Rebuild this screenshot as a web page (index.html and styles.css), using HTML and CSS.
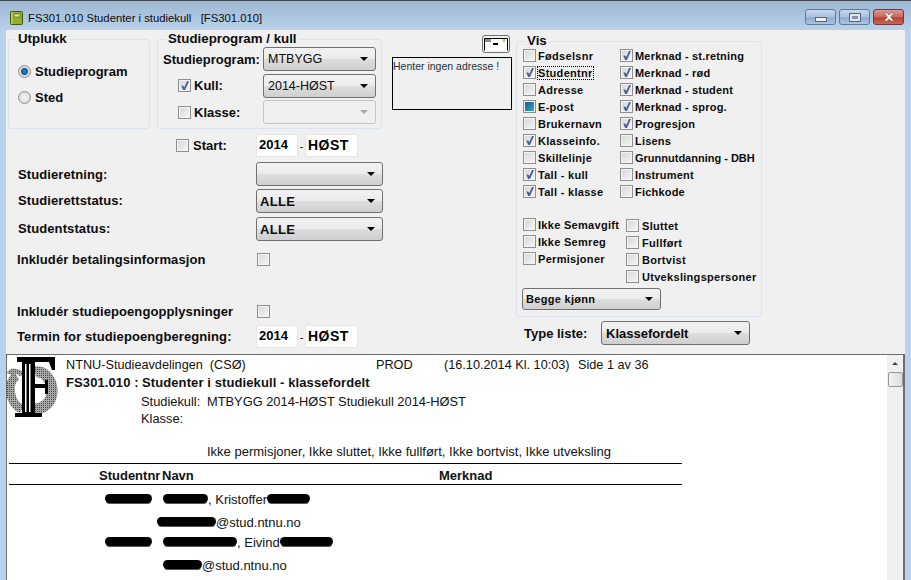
FILE: index.html

```html
<!DOCTYPE html>
<html lang="nb">
<head>
    <meta charset="UTF-8">
    <title>FS301.010 Studenter i studiekull</title>
    <link rel="stylesheet" href="styles.css">
</head>
<body>
<div id="window">
    <header id="titlebar">
        <svg class="app-icon" width="13" height="14" viewBox="0 0 13 14">
            <rect x="0.500" y="0.500" width="12" height="13" rx="1" fill="#93ad2c" stroke="#3f5a12"/>
            <path d="M2 1v12" stroke="#d8e27a" stroke-width="1"/>
            <rect x="4" y="3" width="6" height="3" fill="#e4eb95" stroke="#3f5a12" stroke-width="0.600"/>
        </svg>
        <span class="title-text">FS301.010 Studenter i studiekull &nbsp; [FS301.010]</span>
        <div class="win-buttons">
            <div class="win-btn"><i class="glyph-min"></i></div>
            <div class="win-btn"><i class="glyph-max"></i></div>
            <div class="win-btn close">
                <svg width="16" height="10" viewBox="0 0 16 10"><path d="M3 1h3l2 2 2-2h3l-3.500 4L13 9h-3L8 7 6 9H3l3.500-4z" fill="#f4f4f4" stroke="#8b4a44" stroke-width="0.500"/></svg>
            </div>
        </div>
    </header>

    <form id="params">
        <div class="left">
            <div class="top-row">
                <fieldset class="group utplukk">
                    <legend>Utplukk</legend>
                    <div class="radio-row"><span class="radio on"></span><label>Studieprogram</label></div>
                    <div class="radio-row"><span class="radio"></span><label>Sted</label></div>
                </fieldset>
                <fieldset class="group program">
                    <legend>Studieprogram / kull</legend>
                    <div class="prog-row">
                        <label class="prog-label">Studieprogram:</label>
                        <div class="select prog-select">MTBYGG</div>
                    </div>
                    <div class="prog-row">
                        <div class="prog-check"><span class="check on"></span><label>Kull:</label></div>
                        <div class="select prog-select">2014-HØST</div>
                    </div>
                    <div class="prog-row">
                        <div class="prog-check"><span class="check"></span><label>Klasse:</label></div>
                        <div class="select prog-select disabled"></div>
                    </div>
                </fieldset>
                <div class="address">
                    <div class="mail-btn">
                        <svg width="24" height="13" viewBox="0 0 24 13">
                            <path d="M0.500 12.500V0.500H23.500V12.500" fill="#fff" stroke="#000"/>
                            <rect x="1" y="1" width="6" height="3" fill="#8a8a8a"/>
                            <rect x="9" y="5" width="5" height="2" fill="#000"/>
                            <rect x="19" y="1" width="2" height="3" fill="#d8c420"/>
                        </svg>
                    </div>
                    <div class="address-box">Henter ingen adresse !</div>
                </div>
            </div>

            <div class="start-row">
                <span class="check"></span><label>Start:</label>
                <div class="term"><span class="field year">2014</span><span class="dash">-</span><span class="field">HØST</span></div>
            </div>

            <div class="line select-line first-select"><label>Studieretning:</label><div class="select wide"></div></div>
            <div class="line select-line second-select"><label>Studierettstatus:</label><div class="select wide big">ALLE</div></div>
            <div class="line select-line"><label>Studentstatus:</label><div class="select wide big">ALLE</div></div>
            <div class="line pay-line"><label class="flush">Inkludér betalingsinformasjon</label><span class="check"></span></div>
            <div class="line points-line"><label class="flush">Inkludér studiepoengopplysninger</label><span class="check"></span></div>
            <div class="line term-line"><label class="flush">Termin for studiepoengberegning:</label>
                <div class="term"><span class="field year">2014</span><span class="dash">-</span><span class="field">HØST</span></div>
            </div>
        </div>

        <div class="right">
            <fieldset class="group vis">
                <legend>Vis</legend>
                <div class="vis-grid">
                    <div class="opt"><span class="check"></span><label>Fødselsnr</label></div>
                    <div class="opt"><span class="check on"></span><label>Merknad - st.retning</label></div>
                    <div class="opt"><span class="check on"></span><label class="focused">Studentnr</label></div>
                    <div class="opt"><span class="check on"></span><label>Merknad - rød</label></div>
                    <div class="opt"><span class="check"></span><label>Adresse</label></div>
                    <div class="opt"><span class="check on"></span><label>Merknad - student</label></div>
                    <div class="opt"><span class="check mixed"></span><label>E-post</label></div>
                    <div class="opt"><span class="check on"></span><label>Merknad - sprog.</label></div>
                    <div class="opt"><span class="check"></span><label>Brukernavn</label></div>
                    <div class="opt"><span class="check on"></span><label>Progresjon</label></div>
                    <div class="opt"><span class="check on"></span><label>Klasseinfo.</label></div>
                    <div class="opt"><span class="check"></span><label>Lisens</label></div>
                    <div class="opt"><span class="check"></span><label>Skillelinje</label></div>
                    <div class="opt"><span class="check"></span><label class="tight">Grunnutdanning - DBH</label></div>
                    <div class="opt"><span class="check on"></span><label>Tall - kull</label></div>
                    <div class="opt"><span class="check"></span><label>Instrument</label></div>
                    <div class="opt"><span class="check on"></span><label>Tall - klasse</label></div>
                    <div class="opt"><span class="check"></span><label>Fichkode</label></div>
                </div>
                <div class="filter-cols">
                    <div class="filter-col">
                        <div class="opt"><span class="check"></span><label>Ikke Semavgift</label></div>
                        <div class="opt"><span class="check"></span><label>Ikke Semreg</label></div>
                        <div class="opt"><span class="check"></span><label>Permisjoner</label></div>
                    </div>
                    <div class="filter-col second">
                        <div class="opt"><span class="check"></span><label>Sluttet</label></div>
                        <div class="opt"><span class="check"></span><label>Fullført</label></div>
                        <div class="opt"><span class="check"></span><label>Bortvist</label></div>
                        <div class="opt"><span class="check"></span><label>Utvekslingspersoner</label></div>
                    </div>
                </div>
                <div class="select gender">Begge kjønn</div>
            </fieldset>
            <div class="type-row">
                <label>Type liste:</label>
                <div class="select type-select">Klassefordelt</div>
            </div>
        </div>
    </form>

    <section id="report">
        <div class="page">
            <div class="head">
                <svg class="logo" width="52" height="62" viewBox="0 0 52 62">
                    <defs>
                        <pattern id="dots" width="2" height="2" patternUnits="userSpaceOnUse">
                            <rect width="2" height="2" fill="#a8a8a8"/>
                            <rect width="1" height="1" fill="#4a4a4a"/>
                        </pattern>
                    </defs>
                    <path d="M10 19C0 24 1 46 15 52" fill="none" stroke="url(#dots)" stroke-width="9"/>
                    <path d="M2 17C4 13 11 13 15 18" fill="none" stroke="url(#dots)" stroke-width="5"/>
                    <path d="M28 15C38 13 46 25 45 36 44 46 36 52 28 52" fill="none" stroke="url(#dots)" stroke-width="11"/>
                    <path d="M10 0H48V13H45L42 5H28V27H38V23H41V37H38V31H28V56H35V60H8V56H15V5H10z" fill="#000"/>
                    <path d="M18 7h1.500v48H18zM22 7h1.500v48H22z" fill="#fff"/>
                </svg>
                <div class="head-text">
                    <div class="head-line">
                        <span class="org">NTNU-Studieavdelingen &nbsp;(CSØ)</span>
                        <span class="env">PROD</span>
                        <span class="stamp">(16.10.2014 Kl. 10:03)</span>
                        <span class="pageno">Side 1 av 36</span>
                    </div>
                    <div class="head-title"><span class="code">FS301.010 :</span>Studenter i studiekull - klassefordelt</div>
                    <div class="head-sub"><span class="sub-key">Studiekull:</span>MTBYGG 2014-HØST Studiekull 2014-HØST</div>
                    <div class="head-sub">Klasse:</div>
                </div>
            </div>
            <div class="filters">Ikke permisjoner, Ikke sluttet, Ikke fullført, Ikke bortvist, Ikke utveksling</div>
            <div class="col-head">
                <span class="col-nr">Studentnr</span><span class="col-name">Navn</span><span class="col-note">Merknad</span>
            </div>
            <div class="student first"><i class="ink nr"></i><i class="ink last1"></i><span>, Kristoffer</span><i class="ink mid1"></i></div>
            <div class="mail one"><i class="ink m1"></i><span>@stud.ntnu.no</span></div>
            <div class="student"><i class="ink nr"></i><i class="ink last2"></i><span>, Eivind</span><i class="ink mid2"></i></div>
            <div class="mail two"><i class="ink m2"></i><span>@stud.ntnu.no</span></div>
        </div>
        <div class="scrollbar">
            <div class="arrow"></div>
            <div class="thumb"></div>
        </div>
    </section>
</div>
</body>
</html>
```

FILE: styles.css

```css
html, body {
    margin: 0;
    height: 100%;
    overflow: hidden;
}
body {
    background: #b9d1ea;
    font-family: "Liberation Sans", Arial, sans-serif;
    font-size: 12px;
    color: #0c0c0c;
}
label {
    font-weight: bold;
}
#window {
    display: flex;
    flex-flow: column;
    height: 580px;
}

/* title bar */
#titlebar {
    display: flex;
    align-items: center;
    height: 30px;
    box-sizing: border-box;
    padding: 5px 7px 0 10px;
    border-top: 1px solid #3c4650;
    background: linear-gradient(#9db8d3, #b9d1ea);
}
.app-icon {
    margin-right: 5px;
}
.title-text {
    font-size: 11.300px;
    white-space: pre;
}
.win-buttons {
    display: flex;
    gap: 3px;
    margin-left: auto;
    margin-top: -2px;
}
.win-btn {
    display: flex;
    align-items: center;
    justify-content: center;
    width: 31px;
    height: 16px;
    box-sizing: border-box;
    border: 1px solid #5f7a99;
    border-radius: 3px;
    background: linear-gradient(#c5d8ec, #a9c1dc 50%, #8eabcb 55%, #a9c6e2);
}
.win-btn.close {
    border-color: #6e3a3a;
    background: linear-gradient(#dd9a90, #c9665a 50%, #b8402f 55%, #c8675a);
}
.glyph-min {
    width: 10px;
    height: 3px;
    margin-top: 4px;
    border: 1px solid #56677c;
    background: #eee;
}
.glyph-max {
    width: 6px;
    height: 3px;
    border: 2px solid #dfe5ec;
    outline: 1px solid #56677c;
    background: #7d93ad;
}

/* form */
#params {
    display: flex;
    height: 324px;
    margin: 0 6px 0 6px;
    background: #f0f0f0;
    flex-shrink: 0;
}
.left {
    width: 510px;
    flex-shrink: 0;
}
.group {
    margin: 0;
    padding: 0;
    box-sizing: border-box;
    border: 1px solid #dbe4ee;
    border-radius: 3px;
}
.group legend {
    padding: 0 2px 2px;
    margin-left: 7px;
    font-size: 13.300px;
    font-weight: bold;
    line-height: 11px;
}
.top-row {
    display: flex;
    padding: 3px 0 0 2px;
    height: 98px;
    box-sizing: border-box;
    align-items: flex-start;
}
.utplukk {
    width: 142px;
    height: 96px;
    margin-right: 7px;
}
.radio-row {
    display: flex;
    align-items: center;
    height: 26px;
    padding-left: 9px;
}
.radio-row:first-of-type {
    margin-top: 12px;
}
.radio-row label {
    margin-left: 4px;
    font-size: 13px;
}
.radio {
    width: 13px;
    height: 13px;
    box-sizing: border-box;
    border: 1px solid #8e8f8f;
    border-radius: 50%;
    background: radial-gradient(#f6f6f6, #cfcfcf);
}
.radio.on {
    background: radial-gradient(#1c8fc9 0, #0f5d8f 3px, #d8d8d8 4px, #e8e8e8);
}
.program {
    width: 225px;
    height: 96px;
    margin-right: 10px;
}
.program legend {
    margin-left: 8px;
}
.prog-row {
    display: flex;
    align-items: center;
    justify-content: space-between;
    height: 26.500px;
    padding: 0 5px 0 5px;
}
.prog-label {
    font-size: 13px;
}
.prog-check {
    display: flex;
    align-items: center;
    padding-left: 15px;
}
.prog-check label {
    margin-left: 3px;
    font-size: 13px;
}
.prog-select {
    width: 113px;
    padding-left: 3px;
    font-size: 12.800px;
}

/* address */
.address {
    display: flex;
    flex-flow: column;
    align-items: flex-end;
    padding-top: 2px;
}
.mail-btn {
    display: flex;
    align-items: center;
    justify-content: center;
    width: 28px;
    height: 18px;
    margin-right: 2px;
    box-sizing: border-box;
    border: 1px solid #707070;
    border-radius: 3px;
    background: #f2f2f2;
}
.address-box {
    width: 120px;
    height: 53px;
    margin-top: 4px;
    box-sizing: border-box;
    padding: 2px 0;
    border: 1px solid #000;
    font-size: 10.500px;
    color: #26303a;
}

/* selects and inputs */
.select {
    position: relative;
    display: flex;
    align-items: center;
    height: 24px;
    box-sizing: border-box;
    padding: 0 4px;
    border: 1px solid #707070;
    border-radius: 3px;
    background: linear-gradient(#f3f3f3, #ebebeb 48%, #dddddd 52%, #cfcfcf);
    font-size: 12.500px;
}
.select::after {
    content: "";
    position: absolute;
    right: 7px;
    top: 9px;
    border: 4px solid transparent;
    border-top: 4px solid #000;
    border-bottom: 0;
}
.select.disabled {
    border-color: #c4c4c4;
    background: #f0f0f0;
}
.select.disabled::after {
    border-top-color: #a8a8a8;
}
.select.wide {
    width: 127px;
}
.select.big {
    padding-left: 3px;
    font-size: 13px;
    font-weight: bold;
    letter-spacing: 0.300px;
}
.term {
    display: flex;
    align-items: center;
}
.field {
    width: 53px;
    height: 23px;
    box-sizing: border-box;
    padding: 0 2px;
    border: 1px solid #e6e6e6;
    background: #fff;
    color: #000;
    font-size: 14px;
    font-weight: bold;
    line-height: 20px;
    letter-spacing: 0.500px;
}
.field.year {
    width: 42px;
    font-size: 13px;
    letter-spacing: 0;
}
.dash {
    width: 7px;
    text-align: center;
    font-size: 11px;
}
.start-row {
    display: flex;
    align-items: center;
    height: 23px;
    padding-left: 170px;
    margin-top: 6px;
}
.start-row label {
    width: 63px;
    margin-left: 4px;
    font-size: 13px;
}
.line {
    display: flex;
    align-items: center;
}
.line label {
    width: 232px;
    padding-left: 12px;
    font-size: 13px;
    letter-spacing: 0.100px;
}
.line label.flush {
    padding-left: 11px;
    width: 239px;
}
.select-line {
    height: 24px;
    margin-top: 4px;
}
.select-line label {
    width: 238px;
    margin-bottom: 2px;
}
.first-select {
    margin-top: 5px;
}
.first-select label {
    margin-bottom: 0;
}
.second-select {
    margin-top: 3px;
}
.pay-line {
    height: 14px;
    margin-top: 11px;
}
.points-line {
    height: 14px;
    margin-top: 38px;
}
.term-line {
    height: 23px;
    margin-top: 7px;
}
.line .check {
    margin-left: 1px;
}

/* checkboxes */
.check {
    position: relative;
    display: inline-block;
    flex-shrink: 0;
    width: 13px;
    height: 13px;
    box-sizing: border-box;
    border: 1px solid #8e8f8f;
    background: linear-gradient(135deg, #d6d6d6, #f6f6f6);
    box-shadow: inset 0 0 0 1px #f4f4f4;
}
.check.on::after {
    content: "";
    position: absolute;
    inset: 1px;
    background: #4a5f97;
    clip-path: polygon(15% 50%, 35% 50%, 48% 68%, 78% 0, 100% 0, 55% 100%, 35% 100%);
}
.check.mixed {
    background: #fff;
}
.check.mixed::after {
    content: "";
    position: absolute;
    inset: 1px;
    background: linear-gradient(135deg, #0f5f8c, #3fa5cf);
}

/* Vis panel */
.right {
    width: 246px;
}
.vis {
    width: 246px;
    height: 282px;
    margin-top: 5px;
    padding: 0 0 0 5px;
}
.vis legend {
    margin-left: 3px;
}
.vis-grid {
    display: grid;
    grid-template-columns: 97px 1fr;
    grid-auto-rows: 17px;
    margin-top: -1px;
    padding-left: 1px;
}
.opt {
    display: flex;
    align-items: center;
    white-space: nowrap;
}
.opt label {
    margin-left: 2px;
    font-size: 11px;
    letter-spacing: 0.300px;
}
.vis-grid .opt:nth-child(even) label {
    letter-spacing: 0.200px;
}
.vis-grid .opt:nth-child(even) label.tight {
    letter-spacing: 0;
}
.opt label.focused {
    outline: 1px dotted #000;
    outline-offset: 0;
}
.filter-cols {
    display: flex;
    margin-top: 16px;
    padding-left: 1px;
}
.filter-col {
    width: 103px;
}
.filter-col .opt {
    height: 17px;
}
.filter-col.second {
    padding-top: 1px;
}
.filter-col.second label {
    margin-left: 3px;
}
.gender {
    width: 139px;
    height: 22px;
    margin: 3px 0 0 0;
    padding-left: 3px;
    font-size: 11px;
    font-weight: bold;
    letter-spacing: 0.300px;
}
.gender::after {
    top: 8px;
}
.type-row {
    display: flex;
    align-items: center;
    margin-top: 4px;
    padding-left: 8px;
}
.type-row label {
    width: 77px;
    font-size: 13px;
}
.type-select {
    width: 149px;
    font-size: 13px;
    font-weight: bold;
}

/* report */
#report {
    display: flex;
    flex: 1;
    min-height: 0;
    margin: 0 6px;
    box-sizing: border-box;
    border: 1px solid #6d6d6d;
    border-bottom: 0;
    background: #fff;
    border-right-width: 2px;
}
.page {
    flex: 1;
    padding: 2px 0 0 0;
    font-size: 13px;
    color: #111;
}
.head {
    display: flex;
    height: 71px;
}
.logo {
    margin-right: 7px;
    flex-shrink: 0;
}
.head-line {
    display: flex;
    height: 17px;
    line-height: 16px;
    font-size: 12.700px;
}
.org {
    width: 310px;
}
.env {
    width: 68px;
}
.stamp {
    width: 134px;
}
.head-title {
    height: 19px;
    line-height: 18px;
    font-weight: bold;
    letter-spacing: 0.100px;
}
.code {
    display: inline-block;
    width: 76px;
}
.head-sub {
    height: 17px;
    line-height: 17px;
    padding-left: 75px;
    font-size: 12.850px;
}
.sub-key {
    display: inline-block;
    width: 66px;
}
.filters {
    width: 673px;
    margin-left: 2px;
    padding: 15px 0 2px 198px;
    box-sizing: border-box;
    height: 36px;
    line-height: 18px;
    border-bottom: 1px solid #000;
}
.col-head {
    display: flex;
    width: 673px;
    margin-left: 2px;
    box-sizing: border-box;
    height: 21px;
    padding: 2px 0 0 90px;
    line-height: 19px;
    font-weight: bold;
    border-bottom: 1px solid #000;
}
.col-nr {
    width: 63px;
}
.col-name {
    width: 277px;
}
.student, .mail {
    display: flex;
    align-items: center;
    line-height: 14px;
    height: 14px;
}
.student.first {
    margin-top: 8px;
}
.student {
    padding-left: 98px;
}
.mail {
    margin-top: 9px;
}
.student:not(.first) {
    margin-top: 6px;
}
.mail.one {
    padding-left: 150px;
}
.mail.two {
    padding-left: 156px;
}
.ink {
    display: block;
    height: 9px;
    margin-bottom: 3px;
    border-radius: 5px;
    background: #000;
    box-shadow: 0 2px 0 -1px #555;
}
.ink.nr { width: 47px; margin-right: 11px; }
.ink.last1 { width: 45px; }
.ink.last2 { width: 74px; }
.ink.mid1 { width: 43px; }
.ink.mid2 { width: 53px; }
.ink.m1 { width: 59px; }
.ink.m2 { width: 39px; }

/* scrollbar */
.scrollbar {
    display: flex;
    flex-flow: column;
    align-items: center;
    width: 16px;
    padding-top: 7px;
    background: #f0f0f0;
}
.arrow {
    border: 3px solid transparent;
    border-bottom: 3px solid #444;
    border-top: 0;
}
.thumb {
    width: 15px;
    height: 15px;
    margin-top: 7px;
    box-sizing: border-box;
    border: 1px solid #979797;
    border-radius: 2px;
    background: linear-gradient(90deg, #f4f4f4, #dcdcdc);
}
```
